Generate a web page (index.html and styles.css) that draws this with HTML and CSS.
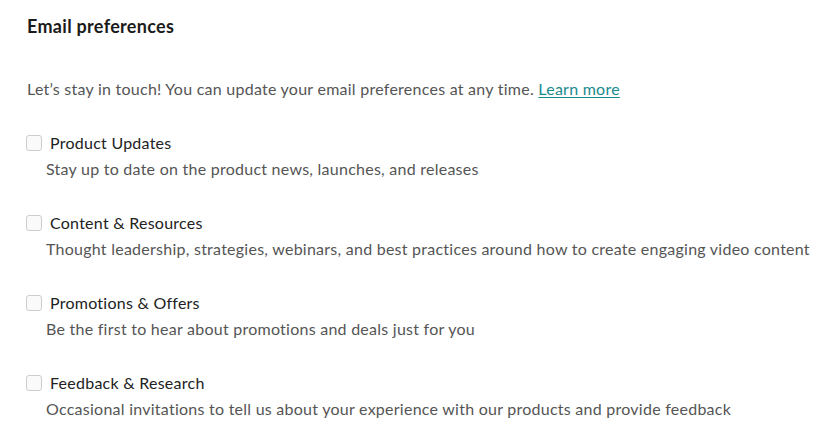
FILE: index.html
```html
<!DOCTYPE html>
<html>
<head>
<meta charset="utf-8">
<link rel="stylesheet" href="styles.css">
</head>
<body>
<section class="prefs">
  <h2 class="title">Email preferences</h2>
  <p class="intro">Let’s stay in touch! You can update your email preferences at any time. <a href="#" class="link">Learn more</a></p>
  <ul class="list">
    <li class="item">
      <label class="row"><span class="box"></span><span class="label">Product Updates</span></label>
      <div class="desc">Stay up to date on the product news, launches, and releases</div>
    </li>
    <li class="item">
      <label class="row"><span class="box"></span><span class="label">Content &amp; Resources</span></label>
      <div class="desc">Thought leadership, strategies, webinars, and best practices around how to create engaging video content</div>
    </li>
    <li class="item">
      <label class="row"><span class="box"></span><span class="label">Promotions &amp; Offers</span></label>
      <div class="desc">Be the first to hear about promotions and deals just for you</div>
    </li>
    <li class="item">
      <label class="row"><span class="box"></span><span class="label">Feedback &amp; Research</span></label>
      <div class="desc">Occasional invitations to tell us about your experience with our products and provide feedback</div>
    </li>
  </ul>
</section>
</body>
</html>
```
FILE: styles.css
```css
* { box-sizing: border-box; }
html, body { margin: 0; padding: 0; background: #fff; }
body { font-family: Lato, "Open Sans", sans-serif; }
.prefs { padding: 15px 0 0 27px; }
.title { margin: 0; font-size: 18px; font-weight: 700; color: #1b1b1b; line-height: 22px; letter-spacing: 0.3px; }
.intro { margin: 41px 0 0; font-size: 16px; line-height: 22px; color: #555; letter-spacing: 0.25px; }
.link { color: #1a8a8e; text-decoration: underline; text-underline-offset: 2px; }
.list { list-style: none; margin: 32px 0 0; padding: 0; display: flex; flex-direction: column; gap: 32px; }
.item { display: flex; flex-direction: column; gap: 4px; }
.row { display: flex; align-items: center; gap: 8px; margin-left: -1px; }
.box { width: 16px; height: 16px; border: 1px solid #ccc; border-radius: 3px; background: #fafafa; flex: none; }
.label { font-size: 16px; line-height: 22px; color: #222; letter-spacing: 0.25px; }
.desc { margin-left: 19px; font-size: 16px; line-height: 22px; color: #555; letter-spacing: 0.25px; }
```
